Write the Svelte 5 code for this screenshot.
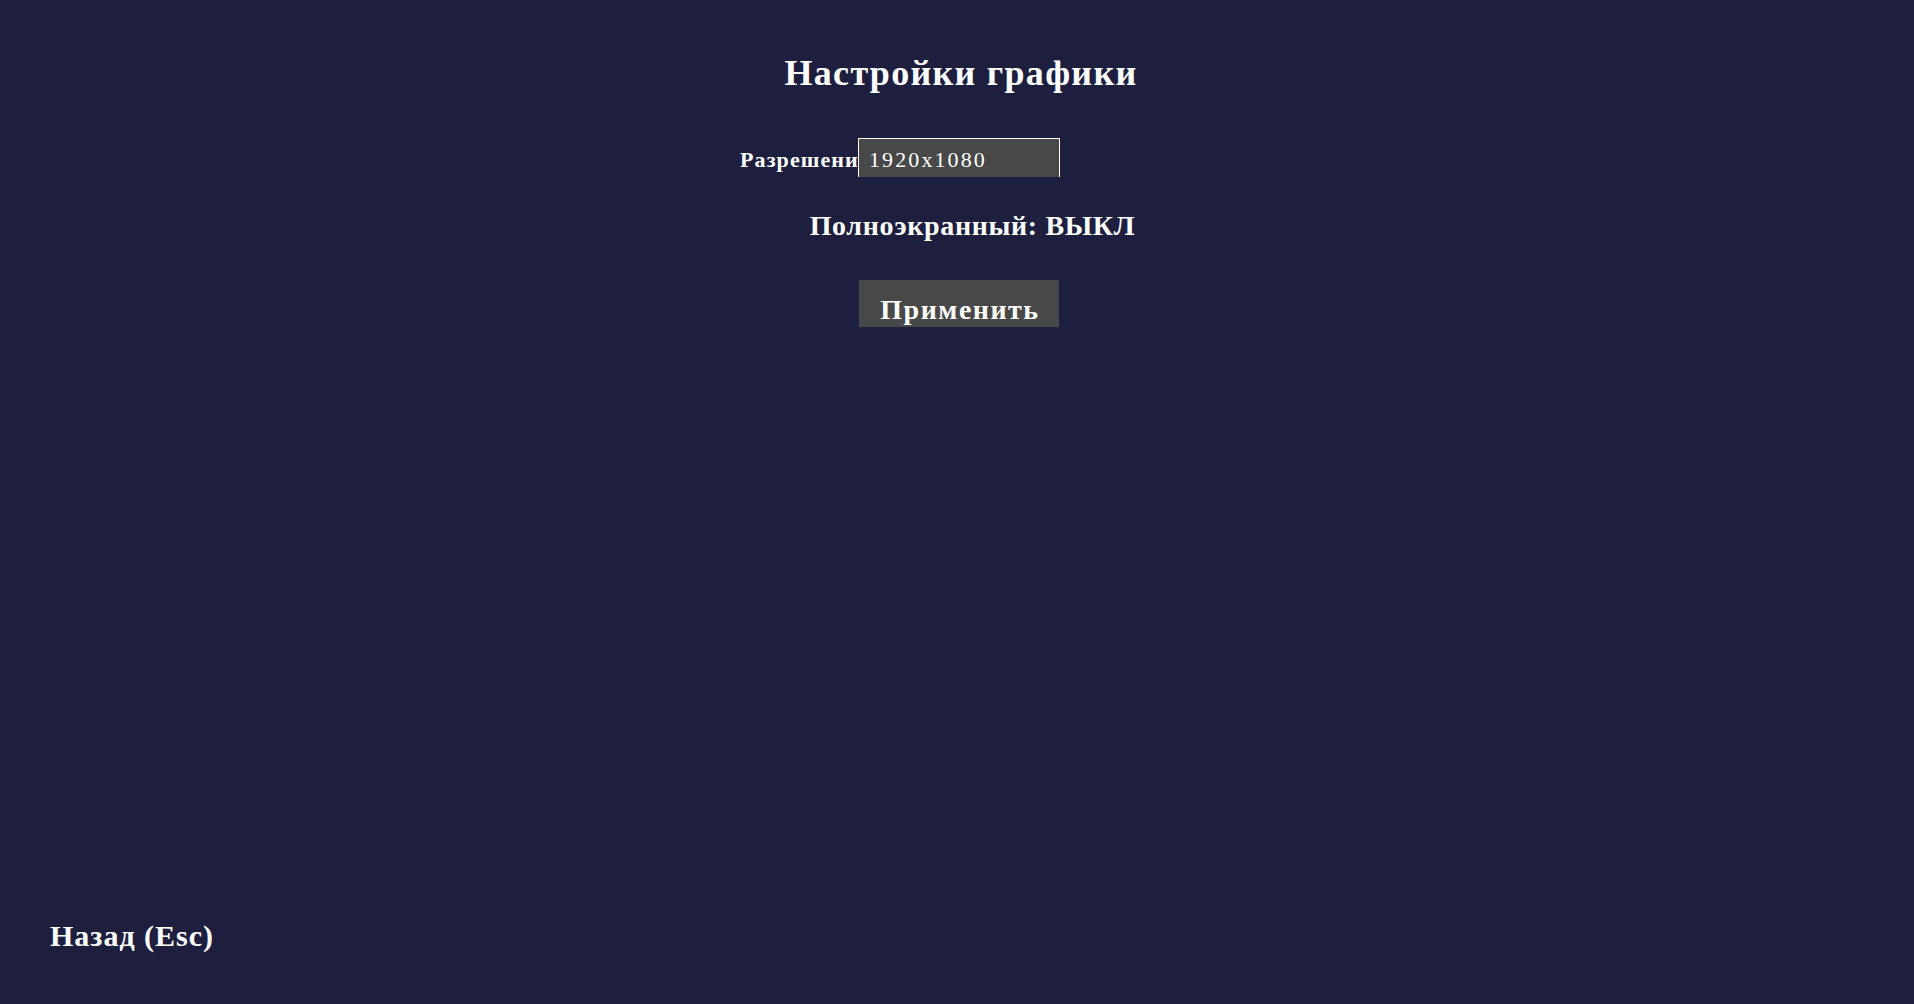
<script>
  let resolution = $state('1920x1080');
  let fullscreen = $state(false);
</script>

<div class="page">
  <h1 class="title">Настройки графики</h1>

  <div class="res-row">
    <label class="res-label" for="res">Разрешение:</label>
    <input id="res" class="res-input" bind:value={resolution} />
  </div>

  <button class="toggle" onclick={() => (fullscreen = !fullscreen)}>
    Полноэкранный: {fullscreen ? 'ВКЛ' : 'ВЫКЛ'}
  </button>

  <button class="apply">Применить</button>

  <button class="back">Назад (Esc)</button>
</div>

<style>
  :global(body) {
    margin: 0;
    background: #1e1e3f;
  }

  .page {
    box-sizing: border-box;
    height: 100vh;
    overflow: hidden;
    display: flex;
    flex-direction: column;
    align-items: center;
    padding: 51px 0 50px;
    background: #1e1e3f;
    color: #fff;
    font-family: "Liberation Serif", serif;
    font-weight: 700;
  }

  .title {
    margin: 0;
    padding-left: 8px;
    height: 45px;
    font-size: 36px;
    line-height: 45px;
    font-weight: 700;
    letter-spacing: 1.3px;
    white-space: nowrap;
  }

  .res-row {
    display: grid;
    grid-template-columns: 1fr 202px 1fr;
    width: 100%;
    margin-top: 42px;
    padding-left: 4px;
    box-sizing: border-box;
  }

  /* label is wider than its slot in the original, the end gets cut */
  .res-label {
    justify-self: end;
    width: 118px;
    height: 38px;
    padding-top: 2px;
    overflow: hidden;
    white-space: nowrap;
    font-size: 22px;
    line-height: 39px;
    letter-spacing: 1.1px;
  }

  .res-input {
    display: block;
    box-sizing: border-box;
    width: 202px;
    height: 39px;
    padding: 4px 10px 0;
    background: #484848;
    border: 1px solid #fff;
    border-bottom: none;
    color: #fff;
    font: 400 22px/34px "Liberation Serif", serif;
    letter-spacing: 2.1px;
    outline: none;
  }

  .toggle {
    margin: 30px 0 0 31px;
    padding: 0;
    height: 35px;
    background: none;
    border: none;
    color: #fff;
    font: 700 28px/35px "Liberation Serif", serif;
    letter-spacing: 0.65px;
    white-space: nowrap;
  }

  .apply {
    display: block;
    box-sizing: border-box;
    margin: 37px 0 0 4px;
    width: 200px;
    height: 47px;
    padding: 10px 0 0 2px;
    background: #484848;
    border: none;
    color: #fff;
    font: 700 28px/40px "Liberation Serif", serif;
    letter-spacing: 1.5px;
    text-align: center;
  }

  .back {
    margin: auto 0 0 50px;
    align-self: flex-start;
    padding: 0;
    background: none;
    border: none;
    color: #fff;
    font: 700 30px/36px "Liberation Serif", serif;
    letter-spacing: 1px;
    white-space: nowrap;
  }
</style>
